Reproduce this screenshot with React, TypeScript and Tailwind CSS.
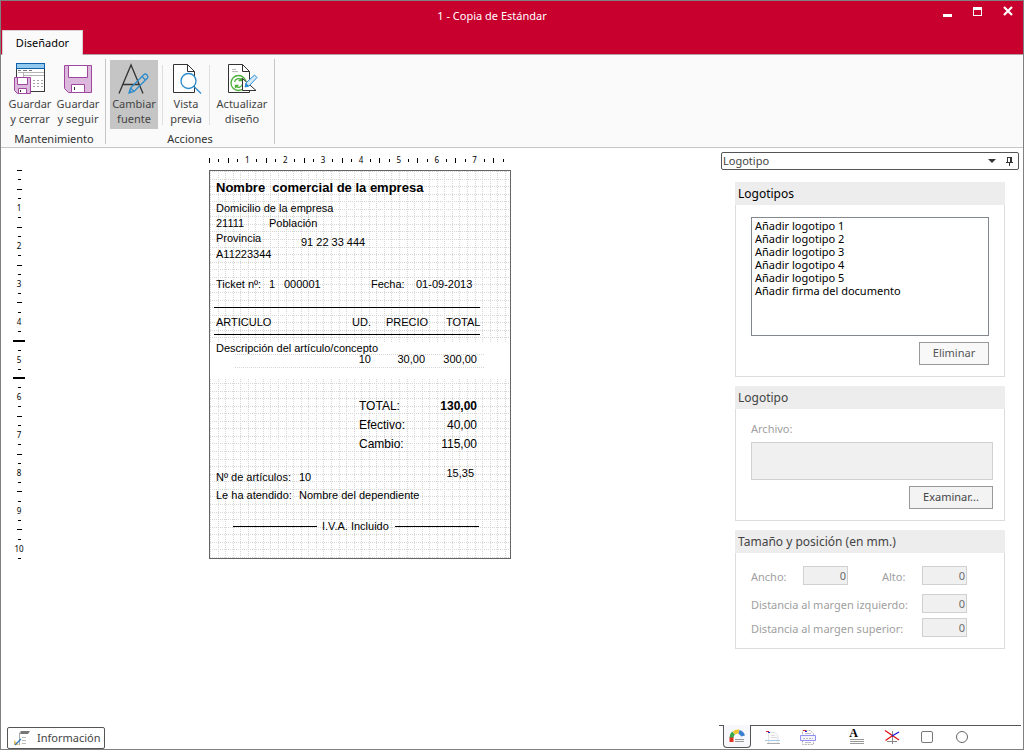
import type { ReactNode } from 'react'
import { clsx } from 'clsx'

type CanvasText = {
  text: string
  x: number
  y: number
  size?: 'sm' | 'md' | 'lg'
  bold?: boolean
  alignRight?: boolean
}

// x / y are relative to the ticket's top left corner; right aligned texts give their right edge
const TICKET_TEXTS: CanvasText[] = [
  { text: 'Nombre  comercial de la empresa', x: 6, y: 8, size: 'lg', bold: true },
  { text: 'Domicilio de la empresa', x: 6, y: 30 },
  { text: '21111', x: 6, y: 45 },
  { text: 'Población', x: 59, y: 45 },
  { text: 'Provincia', x: 6, y: 60 },
  { text: '91 22 33 444', x: 91, y: 64 },
  { text: 'A11223344', x: 6, y: 76 },
  { text: 'Ticket nº:', x: 6, y: 106 },
  { text: '1', x: 59, y: 106 },
  { text: '000001', x: 74, y: 106 },
  { text: 'Fecha:', x: 161, y: 106 },
  { text: '01-09-2013', x: 206, y: 106 },
  { text: 'ARTICULO', x: 6, y: 144 },
  { text: 'UD.', x: 142, y: 144 },
  { text: 'PRECIO', x: 176, y: 144 },
  { text: 'TOTAL', x: 236, y: 144 },
  { text: 'Descripción del artículo/concepto', x: 6, y: 170 },
  { text: '10', x: 161, y: 181, alignRight: true },
  { text: '30,00', x: 215, y: 181, alignRight: true },
  { text: '300,00', x: 267, y: 181, alignRight: true },
  { text: 'TOTAL:', x: 149, y: 227, size: 'md' },
  { text: '130,00', x: 267, y: 227, size: 'md', bold: true, alignRight: true },
  { text: 'Efectivo:', x: 149, y: 246, size: 'md' },
  { text: '40,00', x: 267, y: 246, size: 'md', alignRight: true },
  { text: 'Cambio:', x: 149, y: 265, size: 'md' },
  { text: '115,00', x: 267, y: 265, size: 'md', alignRight: true },
  { text: '15,35', x: 264, y: 295, alignRight: true },
  { text: 'Nº de artículos:', x: 6, y: 299 },
  { text: '10', x: 89, y: 299 },
  { text: 'Le ha atendido:', x: 6, y: 317 },
  { text: 'Nombre del dependiente', x: 89, y: 317 },
  { text: 'I.V.A. Incluido', x: 112, y: 348 },
]

const LOGOS = [
  'Añadir logotipo 1',
  'Añadir logotipo 2',
  'Añadir logotipo 3',
  'Añadir logotipo 4',
  'Añadir logotipo 5',
  'Añadir firma del documento',
]

const SIZE_CLASS = {
  sm: 'text-[11px] leading-[15px]',
  md: 'text-[12px] leading-[16px]',
  lg: 'text-[13px] leading-[17px]',
}

const GRID_STEP = 7.56

function gridLines(from: number, to: number) {
  const lines: number[] = []
  for (let i = 0; Math.round(from + i * GRID_STEP) <= to; i++) {
    lines.push(Math.round(from + i * GRID_STEP))
  }
  return lines
}

function GridBand({ top, bottom, first }: { top: number; bottom: number; first: number }) {
  return (
    <g stroke="#d6d6d6" strokeDasharray="1 1">
      {gridLines(0, 299).map((x) => (
        <line key={`v${x}`} x1={x + 0.5} x2={x + 0.5} y1={top} y2={bottom} />
      ))}
      {gridLines(first, bottom).map((y) => (
        <line key={`h${y}`} x1="0" x2="300" y1={y + 0.5} y2={y + 0.5} />
      ))}
    </g>
  )
}

function Ticket() {
  return (
    <div className="relative h-[389px] w-[302px] border border-[#646464] bg-white font-['Liberation_Sans',Arial,sans-serif] text-black">
      <svg className="absolute inset-0" width="300" height="387" shapeRendering="crispEdges" aria-hidden="true">
        <GridBand top={0} bottom={171} first={0} />
        <GridBand top={208} bottom={387} first={212} />
        <g stroke="#d6d6d6" strokeDasharray="1 1">
          <line x1="25" x2="274" y1="183.5" y2="183.5" />
          <line x1="25" x2="274" y1="196.5" y2="196.5" />
        </g>
        <g stroke="#000">
          <line x1="4" x2="270" y1="136.5" y2="136.5" />
          <line x1="4" x2="270" y1="163.5" y2="163.5" />
          <line x1="23" x2="107" y1="355.5" y2="355.5" />
          <line x1="185" x2="269" y1="355.5" y2="355.5" />
        </g>
      </svg>
      {TICKET_TEXTS.map((item) => (
        <span
          key={`${item.x}-${item.y}`}
          className={clsx(
            'absolute whitespace-pre',
            SIZE_CLASS[item.size ?? 'sm'],
            item.bold && 'font-bold',
            item.alignRight && '-translate-x-full',
          )}
          style={{ left: item.x, top: item.y }}
        >
          {item.text}
        </span>
      ))}
    </div>
  )
}

// One mark every 2.5 mm: number, short, long, short
function Ruler({ marks, vertical, bands = [] }: { marks: number; vertical?: boolean; bands?: number[] }) {
  return (
    <div
      className={clsx(
        "flex justify-between font-['Noto_Sans',sans-serif] text-[8px] leading-none text-black",
        vertical ? 'h-[389px] w-3 flex-col' : 'h-3 w-[295px]',
      )}
    >
      {Array.from({ length: marks }, (_, i) => {
        const long = i === 0 || i % 4 === 2
        const isNumber = i > 0 && i % 4 === 0
        return (
          <div key={i} className={clsx('flex items-center justify-center', vertical ? 'h-px w-3' : 'h-3 w-px')}>
            {isNumber && <span className="shrink-0">{i / 4}</span>}
            {!isNumber && vertical && (
              <i
                className={clsx(
                  'shrink-0 bg-black',
                  bands.includes(i) ? 'h-0.5 w-3' : long ? 'h-px w-[5px]' : 'h-px w-[3px]',
                )}
              />
            )}
            {!isNumber && !vertical && <i className={clsx('w-px shrink-0 bg-black', long ? 'h-[5px]' : 'h-[3px]')} />}
          </div>
        )
      })}
    </div>
  )
}

function Icon({ children, size = 32 }: { children: ReactNode; size?: 16 | 32 }) {
  return (
    <svg width={size} height={size} viewBox={`0 0 ${size} ${size}`} fill="none" aria-hidden="true" className="shrink-0">
      {children}
    </svg>
  )
}

const SaveCloseIcon = () => (
  <Icon>
    <g shapeRendering="crispEdges">
      <path d="M2.500 1.500h28v28h-28z" fill="#fff" stroke="#3a3a3a" />
      <path d="M2.500 1.500h28v5h-28z" fill="#93c8ef" stroke="#0c62ab" />
      <path d="M4 8.500h3m2 0h4m2 0h3" stroke="#777" />
      <path d="M4 10.500h26M9.500 11v5M10 13.500h20" stroke="#b4b4b4" />
      <path d="M19 18.500h2m2 0h2m2 0h2M19 21.500h2m2 0h2m2 0h2M19 24.500h2m2 0h2m2 0h2" stroke="#a4a4a4" />
    </g>
    <path d="M.500 15.500h16v16H3.500l-3-3z" fill="#dcb8dc" stroke="#a047a0" />
    <path d="M3.500 15.500h10v7h-10zM4.500 26.500h8v5h-8z" fill="#fff" stroke="#a047a0" />
    <path d="M6.500 28v2" stroke="#333" />
  </Icon>
)

const SaveIcon = () => (
  <Icon>
    <path d="M2.500 3.500h27v27H6.500l-4-4z" fill="#dcb8dc" stroke="#a047a0" />
    <path d="M6.500 3.500h19v12h-19zM9.500 22.500h13v8h-13z" fill="#fff" stroke="#a047a0" />
    <path d="M12.500 25v3" stroke="#333" />
  </Icon>
)

const FontIcon = () => (
  <Icon>
    <path d="M1 31.500 13 3l12 28.500M5 22.500h16" stroke="#333" strokeWidth="1.300" />
    <path d="m11 31 1.500-5L26 12.500c2-1.500 5 1.500 3.500 3.500L16 29.500zM12.500 26l3.500 3.500M24 14.500l3.500 3.500" stroke="#2b8acb" strokeWidth="1.300" />
    <path d="m11 31 1-3 2 2z" fill="#2b8acb" />
  </Icon>
)

const PreviewIcon = () => (
  <Icon>
    <path d="M3.500 2.500h14l7 7v21h-21z" fill="#fff" stroke="#333" />
    <path d="M17.500 2.500v7h7" stroke="#333" />
    <circle cx="18.500" cy="19" r="7.500" fill="#fff" stroke="#2b8acb" strokeWidth="1.300" />
    <path d="m24 24.500 7 7" stroke="#2b8acb" strokeWidth="1.300" />
  </Icon>
)

const RefreshDesignIcon = () => (
  <Icon>
    <path d="M2.500 2.500h14l7 7v21h-21z" fill="#fff" stroke="#333" />
    <path d="M16.500 2.500v7h7" stroke="#333" />
    <path d="M6 7.500h4M6 9.500h6" stroke="#bbb" />
    <circle cx="12.500" cy="21" r="7.500" fill="#fff" stroke="#4caf3a" strokeWidth="1.300" />
    <path d="M8.500 20c.5-3 4.500-4.500 7-2v-2M15.500 18.500h-3M16.500 22c-.5 3-4.500 4.500-7 2v2M9.500 23.500h3" stroke="#4caf3a" strokeWidth="1.300" />
    <path d="M16.500 16.500v12H30z" fill="#fff" stroke="#333" />
    <path d="m19 25 1-4 8.500-8 2.500 2.500-8 8.500z" fill="#d5ebfa" stroke="#2b8acb" />
    <path d="m19 25 1-4 3 3z" fill="#2b8acb" />
  </Icon>
)

function RibbonButton({
  icon,
  lines,
  className,
  active,
}: {
  icon: ReactNode
  lines: [string, string]
  className: string
  active?: boolean
}) {
  return (
    <button
      type="button"
      aria-pressed={active}
      className={clsx(
        'flex h-[69px] flex-col items-center pt-0.5 text-[11px] leading-[15px] text-[#444]',
        active && 'bg-[#c5c5c5]',
        className,
      )}
    >
      {icon}
      <span className="mt-0.5">{lines[0]}</span>
      <span>{lines[1]}</span>
    </button>
  )
}

function Ribbon() {
  return (
    <div className="flex h-[93px] border-b border-[#c6c6c6] bg-[#fafafa] pt-1">
      <section className="flex h-[85px] flex-col items-center border-r border-[#c6c6c6] pr-[3px] pl-[5px]">
        <div className="flex pt-px">
          <RibbonButton icon={<SaveCloseIcon />} lines={['Guardar', 'y cerrar']} className="w-12" />
          <RibbonButton icon={<SaveIcon />} lines={['Guardar', 'y seguir']} className="w-12" />
        </div>
        <h2 className="mt-0.5 text-[11px] leading-[15px] text-[#333]">Mantenimiento</h2>
      </section>
      <section className="flex h-[85px] flex-col items-center border-r border-[#c6c6c6] pl-1">
        <div className="flex items-center pt-px">
          <RibbonButton icon={<FontIcon />} lines={['Cambiar', 'fuente']} className="w-12" active />
          <i className="ml-1 h-[60px] w-px bg-[#dedede]" />
          <RibbonButton icon={<PreviewIcon />} lines={['Vista', 'previa']} className="w-[46px]" />
          <i className="h-[60px] w-px bg-[#dedede]" />
          <RibbonButton icon={<RefreshDesignIcon />} lines={['Actualizar', 'diseño']} className="w-16" />
        </div>
        <h2 className="mt-0.5 pr-1 text-[11px] leading-[15px] text-[#333]">Acciones</h2>
      </section>
    </div>
  )
}

function TitleBar() {
  return (
    <header className="flex h-[54px] flex-col justify-between border-b border-[#b4a0a4] bg-[#c8002d]">
      <div className="flex h-[30px] items-center text-white">
        <div className="w-20" />
        <h1 className="flex-1 text-center text-[11px] leading-4">1 - Copia de Estándar</h1>
        <div className="flex w-30 items-start justify-end gap-5 pr-2.5">
          <button type="button" aria-label="Minimizar" className="-mt-2">
            <svg width="11" height="11" shapeRendering="crispEdges">
              <path d="M1 8h9v3H1z" fill="#fff" />
            </svg>
          </button>
          <button type="button" aria-label="Maximizar" className="-mt-2">
            <svg width="10" height="11" shapeRendering="crispEdges">
              <path d="M0 1h9v9H0zm1 3v5h7V4z" fill="#fff" fillRule="evenodd" />
            </svg>
          </button>
          <button type="button" aria-label="Cerrar" className="-mt-2">
            <svg width="10" height="11">
              <path d="m1 1 8 8M9 1 1 9" stroke="#fff" strokeWidth="2.200" />
            </svg>
          </button>
        </div>
      </div>
      <nav className="flex">
        <button
          type="button"
          className="-mb-px ml-px h-[25px] w-[81px] border border-b-0 border-[#d8d0d0] bg-[#fafafa] text-[11px] text-black"
        >
          Diseñador
        </button>
      </nav>
    </header>
  )
}

function Group({ title, children, className, dark }: { title: string; children: ReactNode; className?: string; dark?: boolean }) {
  return (
    <section className="text-[11px]">
      <h2 className={clsx('h-[23px] bg-[#ededed] px-[3px] text-[12px] leading-[23px]', dark ? 'text-black' : 'text-[#444]')}>
        {title}
      </h2>
      <div className={clsx('border border-t-0 border-[#dcdcdc] px-[15px]', className)}>{children}</div>
    </section>
  )
}

function NumberField({ id, label, className }: { id: string; label: string; className?: string }) {
  return (
    <div className={clsx('flex h-[19px] items-center justify-between', className)}>
      <label htmlFor={id} className="pt-1 text-[#a0a0a0]">
        {label}
      </label>
      <input
        id={id}
        defaultValue="0"
        disabled
        className="h-[19px] w-[45px] border border-[#d0d0d0] bg-[#f0f0f0] px-px text-right text-[#6d6d6d]"
      />
    </div>
  )
}

function SidePanel() {
  return (
    <aside className="flex w-[304px] flex-col pt-1 pr-[3px]">
      <div className="mr-px ml-0.5 flex h-[18px] items-center rounded-xs border border-[#555] bg-white">
        <div className="relative flex-1">
          <select
            aria-label="Panel"
            className="block h-4 w-full appearance-none bg-transparent px-px text-[11px] leading-4 text-[#444]"
          >
            <option>Logotipo</option>
          </select>
          <svg className="pointer-events-none absolute top-1.5 right-0.5" width="8" height="5">
            <path d="M0 0h8L4 4z" fill="#333" />
          </svg>
        </div>
        <button type="button" aria-label="Fijar panel" className="mr-[5px] ml-2">
          <svg width="7" height="9" shapeRendering="crispEdges">
            <path d="M1.500 0v5M1 .5h5M5.500 0v5M4.500 0v5M0 5.500h7M3.500 6v3" stroke="#333" />
          </svg>
        </button>
      </div>

      <div className="mt-3 mr-[15px] ml-4 flex flex-col gap-[9px]">
        <Group title="Logotipos" dark className="flex flex-col pt-3 pb-[11px]">
          <select
            size={6}
            aria-label="Logotipos"
            className="h-[119px] w-full overflow-hidden rounded-none border border-[#828790] bg-white px-0.5 text-[11px] text-black"
          >
            {LOGOS.map((logo) => (
              <option key={logo} className="h-[13px] min-h-0 p-0 px-px leading-[13px]">
                {logo}
              </option>
            ))}
          </select>
          <button
            type="button"
            className="mt-1.5 h-[23px] w-[70px] self-end border border-[#999] bg-[#f8f8f8] text-[#555]"
          >
            Eliminar
          </button>
        </Group>

        <Group title="Logotipo" className="flex flex-col pt-3 pr-[11px] pb-[11px]">
          <label htmlFor="archivo" className="leading-[15px] text-[#a0a0a0]">
            Archivo:
          </label>
          <textarea
            id="archivo"
            disabled
            className="mt-1.5 h-[38px] resize-none border border-[#d0d0d0] bg-[#f0f0f0]"
          />
          <button
            type="button"
            className="mt-1.5 h-[23px] w-[84px] self-end border border-[#999] bg-[#f3f3f3] text-[#444]"
          >
            Examinar...
          </button>
        </Group>

        <Group title="Tamaño y posición (en mm.)" className="pt-[13px] pr-[37px] pb-[11px]">
          <div className="flex justify-between">
            <NumberField id="ancho" label="Ancho:" className="w-[97px]" />
            <NumberField id="alto" label="Alto:" className="w-[85px]" />
          </div>
          <NumberField id="izquierdo" label="Distancia al margen izquierdo:" className="mt-[9px]" />
          <NumberField id="superior" label="Distancia al margen superior:" className="mt-[5px]" />
        </Group>
      </div>

      <PanelTabs />
    </aside>
  )
}

function PanelTabs() {
  const tab = 'flex h-[22px] w-[35px] items-center justify-center'
  return (
    <div className="-mr-px mt-auto flex h-6 border-t border-[#555]">
      <button
        type="button"
        aria-label="Logotipo"
        className="-mt-px mr-1 ml-1 flex h-[23px] w-7 items-center justify-center rounded-b border border-t-0 border-[#555] bg-[#f8f8fc]"
      >
        <Icon size={16}>
          <path d="M2.500 14V9" stroke="#e03020" strokeWidth="4" />
          <path d="M2.500 9.500c0-2 .5-3 2-4.500" stroke="#35a848" strokeWidth="4" />
          <path d="M5 5c1.500-1.300 3-1.700 5-1.500" stroke="#f0c62c" strokeWidth="4" />
          <path d="M10 4c2 .5 3.500 2 4 4" stroke="#3b7fd0" strokeWidth="4" />
          <path d="M6 11.500h9M6 13.500h9" stroke="#999" />
        </Icon>
      </button>
      <button type="button" aria-label="Cabecera" className={tab}>
        <Icon size={16}>
          <path d="M3.500 3.500H10l3 3v8H3.500z" fill="#fafafa" stroke="#e2e2e2" />
          <path d="M1 2h3v1H1z" fill="#e02020" />
          <path d="M3 3h2v1H3z" fill="#2222dd" />
          <path d="M6 6.500h4M6 8.500h6" stroke="#ddd" />
          <path d="M0 11.500h15" stroke="#a5cce8" />
          <path d="M2 14.500h13" stroke="#aaa" />
        </Icon>
      </button>
      <button type="button" aria-label="Detalle" className={tab}>
        <Icon size={16}>
          <path d="M2.500 1.500h8l3 3v11h-11z" fill="#fff" stroke="#b4b4b4" strokeDasharray="2 1" />
          <path d="M3 1h3v1H3z" fill="#e02020" />
          <path d="M5 2h2v1H5z" fill="#2222dd" />
          <path d="M5 4.500h6M5 13.500h6" stroke="#bbb" />
          <path d="M.5 6.500h15v5H.5z" fill="#f4f4ff" stroke="#9090f4" />
          <path d="M3 9.500h10" stroke="#bbb" strokeDasharray="2 1" />
        </Icon>
      </button>
      <button type="button" aria-label="Texto" className="ml-3.5 flex h-[22px] w-[35px] flex-col items-center pt-0.5">
        <span className="pr-1.5 font-['Liberation_Serif',serif] text-[12px] leading-[11px] font-bold text-black">A</span>
        <svg width="14" height="6" shapeRendering="crispEdges">
          <path d="M0 .5h14M0 2.500h14M0 4.500h14" stroke="#999" />
        </svg>
      </button>
      <button type="button" aria-label="Líneas" className={tab}>
        <Icon size={16}>
          <path d="M8.500 2v13M3 12.500h10" stroke="#888" />
          <path d="m1 1.500 14 9.500" stroke="#e01010" strokeWidth="1.300" />
          <path d="M15 3 8 7" stroke="#1515e0" strokeWidth="1.300" />
          <path d="M1.500 11.500 8 7" stroke="#e01010" strokeWidth="1.300" />
        </Icon>
      </button>
      <button type="button" aria-label="Rectángulo" className={tab}>
        <Icon size={16}>
          <rect x="2.500" y="2.500" width="11" height="11" rx="1.500" stroke="#777" />
        </Icon>
      </button>
      <button type="button" aria-label="Círculo" className={tab}>
        <Icon size={16}>
          <circle cx="8" cy="8" r="5.500" stroke="#666" />
        </Icon>
      </button>
    </div>
  )
}

export default function App() {
  return (
    <div className="flex min-h-screen flex-col border border-[#808080] bg-white font-['Noto_Sans','Open_Sans',sans-serif]">
      <TitleBar />
      <Ribbon />
      <div className="flex flex-1">
        <main className="flex flex-1 flex-col justify-between">
          <div className="flex pt-1.5 pl-3">
            <div className="pt-4">
              <Ruler marks={42} vertical bands={[18, 22]} />
            </div>
            <div className="ml-[184px] flex flex-col gap-1">
              <Ruler marks={32} />
              <Ticket />
            </div>
          </div>
          <button
            type="button"
            className="ml-1.5 flex h-[22px] w-[98px] items-center gap-[7px] rounded-xs border border-[#555] bg-white pl-1.5 text-[11px] text-[#444]"
          >
            <Icon size={16}>
              <path d="M5.500 15V4c0-1.500 1-2.500 2.500-2.500" stroke="#aaa" />
              <path d="M7 1h9l-2 3H6z" fill="#777" />
              <path d="M8 7.500h4M8 10.500h4M8 13.500h4" stroke="#bbb" />
              <path d="m0 10 5 5H0z" fill="#f0c060" />
              <path d="m1 15 6-6" stroke="#2b7fc0" strokeWidth="1.300" />
            </Icon>
            Información
          </button>
        </main>
        <SidePanel />
      </div>
    </div>
  )
}
